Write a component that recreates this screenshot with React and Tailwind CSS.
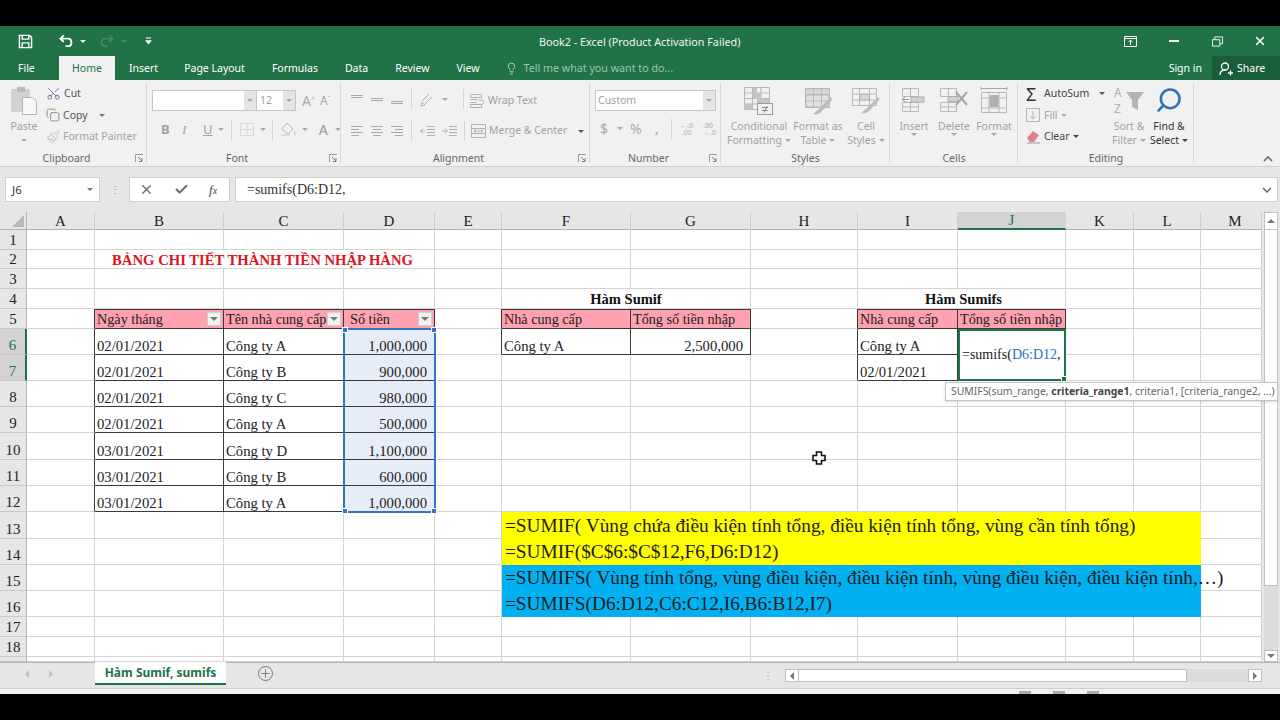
import { Fragment } from 'react';
import { Lightbulb, Plus, Check, X, Scissors, Copy, Paintbrush, Search } from 'lucide-react';
import clsx from 'clsx';

// ── Sheet data ────────────────────────────────────────────────────────────────

const COL_NAMES = ['A', 'B', 'C', 'D', 'E', 'F', 'G', 'H', 'I', 'J', 'K', 'L', 'M'];
const ROW_NUMS = [1, 2, 3, 4, 5, 6, 7, 8, 9, 10, 11, 12, 13, 14, 15, 16, 17, 18, 19];

const DARK = 'border-r border-b border-[#3a3a3a]';
const HEAD = 'bg-[#ffa1ae] border-t border-r border-b border-[#3a3a3a]';
const SEL = 'bg-[#e6edf8] justify-end pr-[7px] border-r border-b border-[#3a3a3a]';
const EDGE = 'border-b border-r border-b-[#d4d4d4] border-r-[#3a3a3a]';
const YELLOW = 'col-span-7 bg-[#ffff00] border-0 text-[#1c1c1c]';
const BLUE = 'col-span-7 bg-[#00b0f0] border-0 text-[#1c1c1c]';

const FILTER = (
  <span className="flex h-[14px] w-[14px] shrink-0 items-center justify-center border border-[#cfcfcf] bg-[#f2f2f2]">
    <span className="h-0 w-0 border-x-[4px] border-t-[4px] border-x-transparent border-t-[#777]" />
  </span>
);

function filterCell(text, extra) {
  return (
    <span className="flex w-full items-center justify-between">
      <span className={extra}>{text}</span>
      {FILTER}
    </span>
  );
}

const head = (t) => ({ t, b: HEAD, a: 'items-center', s: 'text-[14.2px]' });
const formula = (t, b) => ({ t, b, a: 'items-center', s: 'text-[19.3px]', c: 'pl-[3px]' });

const rowsB = [
  ['02/01/2021', 'Công ty A', '1,000,000'],
  ['02/01/2021', 'Công ty B', '900,000'],
  ['02/01/2021', 'Công ty C', '980,000'],
  ['02/01/2021', 'Công ty A', '500,000'],
  ['03/01/2021', 'Công ty D', '1,100,000'],
  ['03/01/2021', 'Công ty B', '600,000'],
  ['03/01/2021', 'Công ty A', '1,000,000'],
];

const CELLS = {
  B2: { t: 'BẢNG CHI TIẾT THÀNH TIỀN NHẬP HÀNG', c: 'col-span-3 justify-center pr-[6px] font-bold text-[#e0141c]', b: 'border-b border-r border-[#d4d4d4]' },
  C2: null,
  D2: null,
  F4: { t: 'Hàm Sumif', a: 'items-center', s: 'text-[14.5px]', c: 'col-span-2 justify-center font-bold text-[#111]' },
  G4: null,
  I4: { t: 'Hàm Sumifs', a: 'items-center', s: 'text-[14.5px]', c: 'col-span-2 justify-center pl-[6px] font-bold text-[#111]' },
  J4: null,
  B5: head(filterCell('Ngày tháng')),
  C5: head(filterCell('Tên nhà cung cấp')),
  D5: head(filterCell('Số tiền', 'pl-[4px]')),
  F5: head('Nhà cung cấp'),
  G5: head('Tổng số tiền nhập'),
  F6: { t: 'Công ty A', b: DARK },
  G6: { t: '2,500,000', c: 'justify-end pr-[7px]', b: DARK },
  I5: head('Nhà cung cấp'),
  J5: head('Tổng số tiền nhập'),
  I6: { t: 'Công ty A', b: DARK },
  I7: { t: '02/01/2021', b: DARK },
  J6: {
    t: (
      <>
        =sumifs(<span className="text-[#2f6fc4]">D6:D12</span>,
        <span className="absolute -bottom-[3px] -right-[3px] h-[6px] w-[6px] border border-white bg-[#217346]" />
      </>
    ),
    a: 'items-center',
    s: 'text-[14px]',
    c: 'relative row-span-2 pl-[2px] bg-white',
    b: 'border-2 border-[#217346]',
  },
  J7: null,
  E5: { b: EDGE },
  E6: { b: EDGE },
  H5: { b: EDGE },
  H6: { b: EDGE },
  H7: { b: EDGE },
  F13: formula('=SUMIF( Vùng chứa điều kiện tính tổng, điều kiện tính tổng, vùng cần tính tổng)', YELLOW),
  F14: formula('=SUMIF($C$6:$C$12,F6,D6:D12)', YELLOW),
  F15: formula('=SUMIFS( Vùng tính tổng, vùng điều kiện, điều kiện tính, vùng điều kiện, điều kiện tính,…)', BLUE),
  F16: formula('=SUMIFS(D6:D12,C6:C12,I6,B6:B12,I7)', BLUE),
};
['G', 'H', 'I', 'J', 'K', 'L'].forEach((c) => {
  [13, 14, 15, 16].forEach((r) => { CELLS[c + r] = null; });
});
[5, 6, 7, 8, 9, 10, 11, 12].forEach((r) => { CELLS['A' + r] = { b: EDGE }; });
rowsB.forEach(([date, name, amount], i) => {
  const r = i + 6;
  CELLS['B' + r] = { t: date, b: DARK };
  CELLS['C' + r] = { t: name, b: DARK };
  CELLS['D' + r] = { t: amount, b: SEL };
});

// ── Small icons ───────────────────────────────────────────────────────────────

const Caret = ({ className, color = 'border-t-[#a8a8a8]' }) => (
  <span className={clsx('inline-block h-0 w-0 border-x-[3px] border-t-[3px] border-x-transparent', color, className)} />
);

function Launcher() {
  return (
    <svg width="9" height="9" viewBox="0 0 9 9" className="absolute bottom-[3px] right-[3px]">
      <path d="M.5 8V.5H8" fill="none" stroke="#9a9a9a" />
      <path d="M3 3l4 4M7 4v3.5H4" fill="none" stroke="#7a7a7a" />
    </svg>
  );
}

function Lines({ kind }) {
  const rows = {
    top: [[1, 13, 2], [1, 13, 4]],
    mid: [[1, 13, 5], [1, 13, 7]],
    bot: [[1, 13, 8], [1, 13, 10]],
    left: [[1, 13, 1], [1, 9, 4], [1, 13, 7], [1, 9, 10]],
    center: [[1, 13, 1], [3, 11, 4], [1, 13, 7], [3, 11, 10]],
    right: [[1, 13, 1], [5, 13, 4], [1, 13, 7], [5, 13, 10]],
  }[kind];
  return (
    <svg width="14" height="12" viewBox="0 0 14 12" stroke="#a9a9a9">
      {rows.map(([a, b, y]) => <path key={y} d={`M${a} ${y + 0.5}H${b}`} />)}
    </svg>
  );
}

// generic pale spreadsheet grid for the Styles / Cells buttons
function StyleIcon({ kind }) {
  return (
    <svg width="32" height="30" viewBox="0 0 32 30" fill="none" stroke="#b9b9b9">
      {kind === 'cond' && (
        <>
          <path d="M1.5 1.5h25v22h-25zM1.5 7h25M1.5 12.500h25M1.500 18h25M9.500 1.500v22M18 1.500v22" />
          <path d="M9.500 1.500H14V7h4v5.500h8V18H14v-5.500H9.500zM1.500 18H9v5.500H1.500z" fill="#c4c4c4" stroke="none" />
          <rect x="14.500" y="17.500" width="15" height="11" fill="#f1f1f1" stroke="#9a9a9a" />
          <path d="M19 21.500h6M19 24.500h6M24 20l-3 6.500" stroke="#8a8a8a" />
        </>
      )}
      {kind === 'table' && (
        <>
          <path d="M3.500 2.500h24v19h-24zM3.500 9h24M3.500 15h24M11.500 2.500v19M19.500 2.500v19" />
          <rect x="3.500" y="2.500" width="24" height="6" fill="#d6d6d6" />
          <rect x="4" y="9" width="23" height="12" fill="#e2e2e2" />
          <path d="M3.500 15h24M11.500 2.500v19M19.500 2.500v19" />
          <path d="M29 11L17 23c-2 1-3 3-6 5 3 1 7 0 9-3l10-11z" fill="#bdbdbd" stroke="none" />
        </>
      )}
      {kind === 'cell' && (
        <>
          <path d="M2.500 2.500h24v17h-24zM2.500 8h24M2.500 14h24M9.500 2.500v17M19.500 2.500v17" />
          <rect x="10" y="8.500" width="9" height="5.500" fill="#d8d8d8" />
          <path d="M28 11L17 22c-2 1-3 3-6 5 3 1 7 0 9-3l10-11z" fill="#bdbdbd" stroke="none" />
        </>
      )}
      {kind === 'insert' && (
        <>
          <path d="M4.500 2.500h16v8h-16zM12.500 2.500v8M4.500 16.500h16v9h-16zM4.500 21h16M12.500 16.500v9" />
          <rect x="13" y="11" width="13" height="5" fill="#d0d0d0" stroke="#b0b0b0" />
          <path d="M11 13.500H4M7 11l-3 2.500L7 16" stroke="#9a9a9a" />
        </>
      )}
      {kind === 'delete' && (
        <>
          <path d="M2.500 2.500h16v8h-16zM10.500 2.500v8M2.500 16.500h16v9h-16zM2.500 21h16M10.500 16.500v9" />
          <rect x="10" y="10.500" width="10" height="5" fill="#d0d0d0" stroke="#b0b0b0" />
          <path d="M18 6l11 13M29 6L18 19" stroke="#a6a6a6" strokeWidth="2" />
        </>
      )}
      {kind === 'format' && (
        <>
          <path d="M3 2.500h26M3 1v3M29 1v3" stroke="#a8a8a8" />
          <path d="M3.500 6.500h25v20h-25zM3.500 12h25M3.500 22h25M11 6.500v20M21 6.500v20" />
          <rect x="11.500" y="9" width="9" height="12" fill="#b0b0b0" stroke="none" />
        </>
      )}
    </svg>
  );
}

function SortIcon() {
  return (
    <div className="relative h-[30px] w-[30px]">
      <span className="absolute left-0 top-0 text-[12px] leading-[14px] text-[#b0b0b0]">A</span>
      <span className="absolute left-0 top-[16px] text-[12px] leading-[14px] text-[#b0b0b0]">Z</span>
      <svg width="18" height="20" viewBox="0 0 18 20" className="absolute left-[12px] top-[5px]">
        <path d="M0 1h18l-6 8v10l-6-3V9z" fill="#b4b4b4" />
      </svg>
    </div>
  );
}

// ── Ribbon pieces ─────────────────────────────────────────────────────────────

function Group({ w, label, launcher, className, children }) {
  return (
    <div className={clsx('relative flex h-full shrink-0 flex-col', w)}>
      <div className={clsx('h-[70px]', className)}>{children}</div>
      <div className={clsx('text-center text-[10.5px] leading-[16px] text-[#666]', launcher && 'pr-[14px]')}>{label}</div>
      {launcher && <Launcher />}
      <span className="absolute bottom-[3px] right-0 top-[3px] w-px bg-[#d9d9d9]" />
    </div>
  );
}

function Large({ icon, lines, w, caret, dark }) {
  return (
    <div className={clsx('flex shrink-0 flex-col items-center text-[10.5px] leading-[14px]', w, dark ? 'text-[#333]' : 'text-[#a2a2a2]')}>
      <div className="flex h-[32px] items-start justify-center">{icon}</div>
      <div className="mt-[1px] whitespace-nowrap">{lines[0]}</div>
      <div className="flex items-center gap-[3px] whitespace-nowrap">
        {lines[1]}
        {caret && <Caret color={dark ? 'border-t-[#444]' : undefined} />}
      </div>
    </div>
  );
}

function Sep({ h = 'h-[20px]' }) {
  return <span className={clsx('block w-px bg-[#d4d4d4]', h)} />;
}

function Ribbon() {
  return (
    <div className="flex h-[86px] bg-[#f1f1f1] font-['Noto_Sans',sans-serif]">
      <Group w="w-[147px]" label="Clipboard" launcher className="flex pt-[6px]">
        <div className="ml-[10px] flex w-[28px] flex-col items-center text-[10.5px] leading-[14px] text-[#a2a2a2]">
          <svg width="28" height="30" viewBox="0 0 28 30">
            <rect x="1" y="3" width="19" height="23" rx="1" fill="#d2d2d2" />
            <rect x="7" y="1" width="8" height="5" fill="#bcbcbc" />
            <path d="M12.500 11.500h10l4 4v13h-14z" fill="#f7f7f7" stroke="#b4b4b4" />
          </svg>
          <div className="mt-[3px]">Paste</div>
          <Caret className="mt-[6px]" />
        </div>
        <div className="-mt-[3px] ml-[8px] flex flex-col text-[10.5px] leading-[21.5px]">
          <div className="flex items-center gap-[3px] text-[#555]">
            <Scissors size={15} strokeWidth={1.4} className="-rotate-90 text-[#52708f]" /> Cut
          </div>
          <div className="flex items-center gap-[3px] text-[#555]">
            <Copy size={14} strokeWidth={1.3} className="text-[#777]" /> Copy
            <Caret className="ml-[8px]" color="border-t-[#777]" />
          </div>
          <div className="flex items-center gap-[3px] text-[#a2a2a2]">
            <Paintbrush size={14} strokeWidth={1.5} className="text-[#bcbcbc]" /> Format Painter
          </div>
        </div>
      </Group>

      <Group w="w-[194px]" label="Font" launcher className="flex flex-col pl-[5px] pt-[10px]">
        <div className="flex items-center">
          <div className="flex h-[21px] w-[105px] justify-end border border-[#c6c6c6] bg-white">
            <span className="flex w-[12px] items-center justify-center bg-[#e4e4e4]"><Caret /></span>
          </div>
          <div className="flex h-[21px] w-[39px] items-center justify-between border-y border-r border-[#c6c6c6] bg-white pl-[3px] text-[10.5px] text-[#a2a2a2]">
            12
            <span className="flex h-full w-[12px] items-center justify-center bg-[#e4e4e4]"><Caret /></span>
          </div>
          <span className="ml-[6px] text-[14px] leading-none text-[#a8a8a8]">A<sup className="text-[7px]">^</sup></span>
          <span className="ml-[5px] text-[12px] leading-none text-[#a8a8a8]">A<sup className="text-[7px]">ˇ</sup></span>
        </div>
        <div className="mt-[8px] flex items-center pl-[9px] text-[13px] text-[#a2a2a2]">
          <b className="w-[21px] font-bold">B</b>
          <i className="w-[21px] font-['Liberation_Serif',serif]">I</i>
          <u className="w-[15px]">U</u>
          <Caret className="mr-[7px]" />
          <Sep />
          <svg width="14" height="13" viewBox="0 0 14 13" className="ml-[8px]" fill="none" stroke="#c2c2c2" strokeDasharray="1 1">
            <path d="M.5.500h13v12H.5zM7 .5v12M.5 6.500h13" />
          </svg>
          <Caret className="ml-[6px] mr-[6px]" />
          <Sep />
          <svg width="17" height="15" viewBox="0 0 17 15" className="ml-[7px]" fill="none" stroke="#b4b4b4">
            <path d="M7 1l6 6-5 5-6-5zM14 9c1 2 2 3 0 4" />
            <path d="M1 13h9" stroke="#dcdcdc" strokeWidth="2" />
          </svg>
          <Caret className="ml-[5px]" />
          <span className="ml-[11px] text-[14px] font-medium">A</span>
          <Caret className="ml-[7px]" />
        </div>
      </Group>

      <Group w="w-[249px]" label="Alignment" launcher className="flex flex-col pl-[9px] pt-[9px]">
        <div className="flex h-[20px] items-center gap-[6px]">
          <Lines kind="top" />
          <Lines kind="mid" />
          <Lines kind="bot" />
          <span className="ml-[1px]"><Sep /></span>
          <svg width="16" height="15" viewBox="0 0 16 15" fill="none" stroke="#b0b0b0" className="ml-[2px]">
            <path d="M2 9l7-7M5 12l7-7M1 14l4-1-3-3z" />
          </svg>
          <Caret />
          <span className="ml-[9px]"><Sep /></span>
          <div className="mt-[3px] flex items-center gap-[3px] text-[10.5px] text-[#a2a2a2]">
            <svg width="15" height="14" viewBox="0 0 15 14" fill="none" stroke="#b0b0b0">
              <path d="M.5.5h11v3H.5zM.5 5.500h7M.5 8.500h6M.5 10.500h11v3H.5zM9 6h3c2 0 2 4 0 4" />
            </svg>
            Wrap Text
          </div>
        </div>
        <div className="mt-[12px] flex items-center gap-[6px]">
          <Lines kind="left" />
          <Lines kind="center" />
          <Lines kind="right" />
          <span className="ml-[1px]"><Sep /></span>
          <svg width="16" height="12" viewBox="0 0 16 12" fill="none" stroke="#b0b0b0" className="ml-[2px]">
            <path d="M7 1.500h8M7 4.500h8M7 7.500h8M7 10.500h8M5 6H0M3 3.500L.5 6 3 8.500" />
          </svg>
          <svg width="16" height="12" viewBox="0 0 16 12" fill="none" stroke="#b0b0b0">
            <path d="M7 1.500h8M7 4.500h8M7 7.500h8M7 10.500h8M0 6h5M3 3.500L5.500 6 3 8.500" />
          </svg>
          <Sep />
          <div className="flex items-center gap-[3px] text-[10.5px] text-[#a2a2a2]">
            <svg width="15" height="14" viewBox="0 0 15 14" fill="none" stroke="#b0b0b0">
              <path d="M.5.500h14v13H.5zM.5 4.500h14M.5 9.500h14M3 7h9M5 5.500L3 7l2 1.500M10 5.500L12 7l-2 1.500" />
            </svg>
            Merge &amp; Center
            <Caret className="ml-[8px]" color="border-t-[#555]" />
          </div>
        </div>
      </Group>

      <Group w="w-[131px]" label="Number" launcher className="flex flex-col pl-[5px] pt-[10px]">
        <div className="flex h-[21px] w-[121px] items-center justify-between border border-[#c6c6c6] bg-white pl-[2px] text-[10.5px] text-[#a2a2a2]">
          Custom
          <span className="flex h-full w-[12px] items-center justify-center bg-[#e4e4e4]"><Caret /></span>
        </div>
        <div className="mt-[7px] flex items-center pl-[5px] text-[#a8a8a8]">
          <span className="w-[17px] text-[14px]">$</span>
          <Caret className="mr-[7px]" />
          <span className="w-[21px] text-[14px]">%</span>
          <span className="w-[20px] pl-[4px] text-[13px] font-bold">,</span>
          <Sep />
          <span className="ml-[8px] w-[23px] text-[7px] leading-[7px]">←.0<br />&nbsp;.00</span>
          <span className="text-[7px] leading-[7px]">.00<br />→.0</span>
        </div>
      </Group>

      <Group w="w-[169px]" label="Styles" className="flex pl-[6px] pt-[6px]">
        <Large w="w-[64px]" icon={<StyleIcon kind="cond" />} lines={['Conditional', 'Formatting']} caret />
        <Large w="w-[54px]" icon={<StyleIcon kind="table" />} lines={['Format as', 'Table']} caret />
        <Large w="w-[42px]" icon={<StyleIcon kind="cell" />} lines={['Cell', 'Styles']} caret />
      </Group>

      <Group w="w-[128px]" label="Cells" className="flex pl-[4px] pt-[6px]">
        <Large w="w-[40px]" icon={<StyleIcon kind="insert" />} lines={['Insert', '']} caret />
        <Large w="w-[40px]" icon={<StyleIcon kind="delete" />} lines={['Delete', '']} caret />
        <Large w="w-[40px]" icon={<StyleIcon kind="format" />} lines={['Format', '']} caret />
      </Group>

      <Group w="w-[176px]" label="Editing" className="flex pl-[8px] pt-[3px]">
        <div className="flex w-[84px] flex-col text-[10.5px] leading-[21.5px]">
          <div className="flex items-center text-[#444]">
            <span className="w-[18px] text-[18px] leading-none text-[#333]">Σ</span>
            AutoSum
            <Caret className="ml-[10px]" color="border-t-[#555]" />
          </div>
          <div className="flex items-center text-[#a2a2a2]">
            <svg width="18" height="14" viewBox="0 0 18 14" fill="none" stroke="#b4b4b4">
              <path d="M.5.500h13v13H.5zM7 3v8M4 8l3 3 3-3" />
            </svg>
            Fill <Caret className="ml-[3px]" />
          </div>
          <div className="flex items-center text-[#444]">
            <svg width="18" height="14" viewBox="0 0 18 14">
              <path d="M1 8l6-7 6 4-5 7H4z" fill="#e07f90" />
              <path d="M1 13h13" stroke="#999" />
            </svg>
            Clear <Caret className="ml-[3px]" color="border-t-[#444]" />
          </div>
        </div>
        <div className="flex pt-[3px]">
          <Large w="w-[38px]" icon={<SortIcon />} lines={['Sort &', 'Filter']} caret />
          <Large w="w-[42px]" dark icon={<Search size={28} strokeWidth={2.2} className="-scale-x-100 text-[#2f75b5]" />} lines={['Find &', 'Select']} caret />
        </div>
      </Group>

      <div className="flex flex-1 items-end justify-end pb-[4px] pr-[7px]">
        <svg width="10" height="6" viewBox="0 0 10 6" fill="none" stroke="#666" strokeWidth="1.500"><path d="M1 5l4-4 4 4" /></svg>
      </div>
    </div>
  );
}

// ── Sheet grid ────────────────────────────────────────────────────────────────

function Grid() {
  return (
    <div className="relative grid h-[450px] w-[1262px] shrink-0 grid-cols-[27px_68px_129px_120px_91px_67px_129px_120px_107px_100px_108px_68px_67px_61px] grid-rows-[18px_20px_19px_20px_20px_20px_26px_26px_26px_26px_27px_26px_26px_27px_26px_26px_26px_20px_20px_5px] overflow-hidden bg-white font-['Liberation_Serif',serif] text-[15px] leading-[18px] text-[#222]">
      {/* corner */}
      <div className="flex items-end justify-end border-b border-r border-[#b4b4b4] bg-[#e6e6e6] p-[2px]">
        <span className="h-0 w-0 border-b-[12px] border-l-[12px] border-b-[#b8b8b8] border-l-transparent" />
      </div>
      {COL_NAMES.map((c) => (
        <div
          key={c}
          className={clsx(
            'flex items-center justify-center border-r',
            c === 'M' && 'pl-[8px]',
            c === 'J'
              ? 'border-b-2 border-[#d2d2d2] border-b-[#217346] bg-[#d2d2d2] text-[#217346]'
              : 'border-b border-[#b4b4b4] border-r-[#d0d0d0] bg-[#e6e6e6]',
          )}
        >
          {c}
        </div>
      ))}

      {ROW_NUMS.map((r) => (
        <Fragment key={r}>
          <div
            className={clsx(
              'flex items-end justify-center overflow-hidden border-b border-[#c8c8c8]',
              r === 6 || r === 7
                ? 'border-r-2 border-r-[#217346] bg-[#d2d2d2] text-[#217346]'
                : 'border-r border-r-[#b4b4b4] bg-[#e6e6e6]',
            )}
          >
            {r < 19 ? r : ''}
          </div>
          {COL_NAMES.map((c) => {
            const id = c + r;
            const cell = CELLS[id];
            if (cell === null) return null;
            return (
              <div
                key={id}
                className={clsx(
                  'flex whitespace-nowrap px-[2px] leading-[16px]',
                  cell?.a ?? 'items-end',
                  cell?.s ?? 'text-[14.7px]',
                  cell?.c,
                  cell?.b ?? 'border-b border-r border-[#d4d4d4]',
                )}
              >
                {cell?.t}
              </div>
            );
          })}
        </Fragment>
      ))}

      {/* selection D6:D12 */}
      <div className="pointer-events-none absolute -inset-px col-start-5 col-end-6 row-start-7 row-end-14 border-2 border-[#3272c8]">
        <span className="absolute -left-[3px] -top-[3px] h-[6px] w-[6px] border border-white bg-[#3272c8]" />
        <span className="absolute -right-[3px] -top-[3px] h-[6px] w-[6px] border border-white bg-[#3272c8]" />
        <span className="absolute -bottom-[3px] -left-[3px] h-[6px] w-[6px] border border-white bg-[#3272c8]" />
        <span className="absolute -bottom-[3px] -right-[3px] h-[6px] w-[6px] border border-white bg-[#3272c8]" />
      </div>
    </div>
  );
}

function ScrollBtn({ dir, className }) {
  const tri = {
    up: 'border-x-[4px] border-b-[4px] border-x-transparent border-b-[#777]',
    down: 'border-x-[4px] border-t-[4px] border-x-transparent border-t-[#777]',
    left: 'border-y-[4px] border-r-[4px] border-y-transparent border-r-[#777]',
    right: 'border-y-[4px] border-l-[4px] border-y-transparent border-l-[#777]',
  }[dir];
  return (
    <div className={clsx('flex shrink-0 items-center justify-center border border-[#c0c0c0] bg-white', className)}>
      <span className={clsx('h-0 w-0', tri)} />
    </div>
  );
}

// ── Page ──────────────────────────────────────────────────────────────────────

export default function App() {
  const tabs = ['Insert', 'Page Layout', 'Formulas', 'Data', 'Review', 'View'];
  const tabGaps = ['ml-[14px]', 'ml-[26px]', 'ml-[27px]', 'ml-[27px]', 'ml-[27px]', 'ml-[27px]'];

  return (
    <div className="relative h-[720px] w-[1280px] overflow-hidden bg-black pb-[26px] pt-[26px] font-['Noto_Sans',sans-serif]">
      <div className="flex h-[668px] flex-col">
        {/* Title bar */}
        <div className="relative flex h-[30px] shrink-0 items-center bg-[#217346] text-white">
          <svg width="15" height="15" viewBox="0 0 16 16" className="ml-[18px]" fill="none" stroke="white" strokeWidth="1.500">
            <path d="M1.500 1.500h11l2 2v11h-13zM4.500 1.500v4h7v-4M4.500 14.500v-5h7v5" />
          </svg>
          <svg width="15" height="14" viewBox="0 0 16 14" className="ml-[26px]" fill="none" stroke="white" strokeWidth="2">
            <path d="M5 1L1.500 4.500 5 8M2 4.500h7.500c5 0 5 8 0 8H7" />
          </svg>
          <Caret className="ml-[6px]" color="border-t-white" />
          <svg width="15" height="14" viewBox="0 0 16 14" className="ml-[13px]" fill="none" stroke="#3f8a60" strokeWidth="2">
            <path d="M11 1l3.500 3.500L11 8M14 4.500H6.500c-5 0-5 8 0 8H9" />
          </svg>
          <Caret className="ml-[7px]" color="border-t-[#3f8a60]" />
          <svg width="7" height="9" viewBox="0 0 8 9" className="ml-[18px]" fill="white">
            <path d="M1 0h6v1H1zM0 3h8L4 8z" />
          </svg>
          <div className="absolute left-[539px] top-[8px] whitespace-nowrap text-[10.8px] text-[#f0f5f2]">Book2 - Excel (Product Activation Failed)</div>
          <div className="ml-auto flex items-center">
            <svg width="13" height="11" viewBox="0 0 13 11" fill="none" stroke="white" className="mr-[32px]">
              <path d="M.5 .5h12v10H.5zM.5 2.500h12M6.500 9V4M4.500 6l2-2 2 2" />
            </svg>
            <span className="mr-[33px] h-[2px] w-[10px] bg-white" />
            <svg width="11" height="11" viewBox="0 0 12 11" fill="none" stroke="white" className="mr-[30px]">
              <path d="M.5 3.500h8v7h-8zM3 3V.5h8.500V8H9" />
            </svg>
            <X size={14} strokeWidth={2.5} className="mr-[13px]" />
          </div>
        </div>

        {/* Tabs */}
        <div className="flex h-[24px] shrink-0 items-center bg-[#217346] pt-px text-[10.5px] text-white">
          <span className="ml-[18px] w-[41px]">File</span>
          <span className="-mt-px flex h-[24px] w-[56px] items-center justify-center bg-[#f1f1f1] pt-px text-[#217346]">Home</span>
          {tabs.map((t, i) => <span key={t} className={tabGaps[i]}>{t}</span>)}
          <span className="ml-[26px] flex items-center gap-[5px] text-[10.7px] text-[#9cc4ad]">
            <Lightbulb size={13} strokeWidth={1.5} className="text-[#cfe2d7]" />
            Tell me what you want to do...
          </span>
          <span className="ml-auto">Sign in</span>
          <span className="-mt-px ml-[10px] flex h-[24px] w-[68px] items-center gap-[4px] bg-[#1a5e39] pl-[7px] pt-px">
            <svg width="14" height="14" viewBox="0 0 14 14" fill="none" stroke="white" strokeWidth="1.300">
              <circle cx="6" cy="4.500" r="3.500" /><path d="M1 13c0-3 2-5 5-5M9 11h5M11.500 8.500v5" />
            </svg>
            Share
          </span>
        </div>

        <Ribbon />

        {/* Formula bar */}
        <div className="flex h-[46px] shrink-0 items-start border-t border-[#d0d0d0] bg-[#e6e6e6] pl-[5px] pr-[2px] pt-[10px]">
          <div className="flex h-[25px] w-[95px] items-center justify-between border border-[#d0d0d0] bg-white pl-[6px] pr-[6px] text-[11.5px] text-[#333]">
            J6
            <Caret color="border-t-[#777]" />
          </div>
          <div className="flex h-[25px] w-[29px] items-center justify-center text-[10px] tracking-[-1px] text-[#999]">⋮</div>
          <div className="flex h-[25px] w-[101px] items-center border border-[#d0d0d0] bg-white pl-[9px]">
            <X size={15} className="text-[#666]" />
            <Check size={15} strokeWidth={3} className="ml-[20px] text-[#666]" />
            <i className="ml-[20px] font-['Liberation_Serif',serif] text-[13px] text-[#444]">f<span className="text-[10px]">x</span></i>
          </div>
          <div className="ml-[5px] flex h-[25px] flex-1 items-center justify-between border border-[#d0d0d0] bg-white pl-[11px] pr-[5px] font-['Liberation_Serif',serif] text-[14px] text-[#333]">
            =sumifs(D6:D12,
            <svg width="10" height="6" viewBox="0 0 10 6" fill="none" stroke="#666" strokeWidth="1.500"><path d="M1 1l4 4 4-4" /></svg>
          </div>
        </div>

        {/* Sheet + vertical scrollbar */}
        <div className="flex h-[450px] shrink-0 bg-[#e6e6e6]">
          <Grid />
          <div className="flex w-[18px] flex-col pl-[2px] pr-[2px]">
            <ScrollBtn dir="up" className="h-[18px]" />
            <div className="h-[356px] border-x border-b border-[#c0c0c0] bg-white" />
            <div className="flex-1 bg-[#dcdcdc]" />
            <ScrollBtn dir="down" className="h-[12px]" />
          </div>
        </div>

        {/* Sheet tabs */}
        <div className="flex h-[26px] shrink-0 items-start border-t border-[#b4b4b4] bg-[#e6e6e6]">
          <span className="ml-[25px] mt-[7px] h-0 w-0 border-y-[4px] border-r-[4px] border-y-transparent border-r-[#c0c0c0]" />
          <span className="ml-[20px] mt-[7px] h-0 w-0 border-y-[4px] border-l-[4px] border-y-transparent border-l-[#c0c0c0]" />
          <div className="-mt-px ml-[42px] flex h-[23px] w-[131px] items-center justify-center border-b-2 border-[#217346] bg-white text-[12px] font-bold text-[#217346]">
            Hàm Sumif, sumifs
          </div>
          <Plus size={15} strokeWidth={1.500} className="ml-[32px] mt-[3px] rounded-full border border-[#777] text-[#666]" />
          <span className="ml-[490px] mt-[6px] text-[10px] leading-[12px] text-[#aaa]">⋮</span>
          <div className="ml-[12px] mt-[6px] flex h-[13px] w-[477px]">
            <ScrollBtn dir="left" className="w-[14px]" />
            <div className="w-[388px] border-y border-r border-[#c0c0c0] bg-white" />
            <div className="flex-1 bg-[#dcdcdc]" />
            <ScrollBtn dir="right" className="w-[14px]" />
          </div>
        </div>

        {/* Status bar, cut off by the black band */}
        <div className="flex h-[6px] shrink-0 items-end gap-[22px] border-t border-[#d0d0d0] bg-[#f1f1f1] pl-[1019px]">
          <span className="h-[3px] w-[12px] bg-[#aaa]" />
          <span className="h-[3px] w-[12px] bg-[#aaa]" />
          <span className="h-[3px] w-[12px] bg-[#aaa]" />
        </div>
      </div>

      {/* Function tooltip */}
      <div className="absolute left-[945px] top-[382px] flex h-[19px] w-[333px] items-center whitespace-nowrap border border-[#c4c4c4] bg-white pl-[5px] text-[10.4px] text-[#666] shadow-sm">
        SUMIFS(sum_range,&nbsp;<b className="text-[#444]">criteria_range1</b>, criteria1, [criteria_range2, ...)
      </div>

      {/* Mouse cursor */}
      <svg width="14" height="14" viewBox="0 0 14 14" className="absolute left-[812px] top-[451px]">
        <path d="M4.500 1h5v3.500H13v5H9.500V13h-5V9.500H1v-5h3.500z" fill="white" stroke="#111" strokeWidth="1.600" />
      </svg>
    </div>
  );
}
